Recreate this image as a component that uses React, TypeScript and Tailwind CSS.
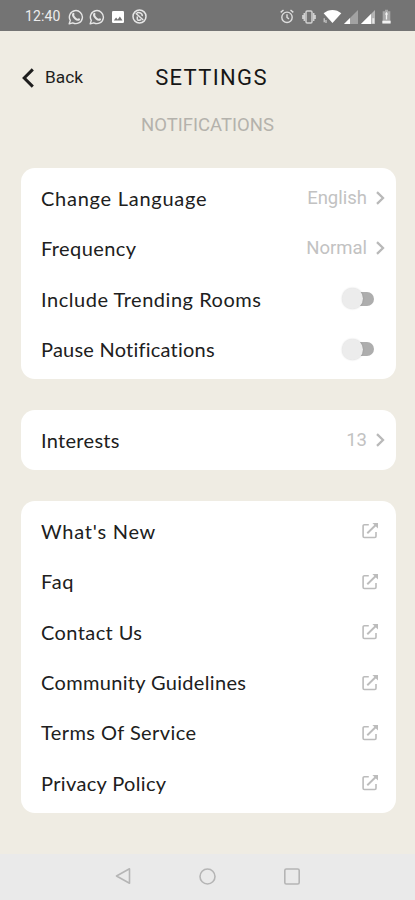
import type { ReactNode } from "react";

type Row = {
  label: string;
  tracking: string;
  value?: string;
  kind: "value" | "toggle" | "link";
};

const groups: Row[][] = [
  [
    { label: "Change Language", tracking: "tracking-[0.74px]", value: "English", kind: "value" },
    { label: "Frequency", tracking: "tracking-[0.4px]", value: "Normal", kind: "value" },
    { label: "Include Trending Rooms", tracking: "tracking-[0.53px]", kind: "toggle" },
    { label: "Pause Notifications", tracking: "tracking-[0.23px]", kind: "toggle" },
  ],
  [{ label: "Interests", tracking: "tracking-[0.3px]", value: "13", kind: "value" }],
  [
    { label: "What's New", tracking: "tracking-[0.75px]", kind: "link" },
    { label: "Faq", tracking: "tracking-[0.75px]", kind: "link" },
    { label: "Contact Us", tracking: "tracking-[0.4px]", kind: "link" },
    { label: "Community Guidelines", tracking: "tracking-[0.33px]", kind: "link" },
    { label: "Terms Of Service", tracking: "tracking-[0.42px]", kind: "link" },
    { label: "Privacy Policy", tracking: "tracking-[0.35px]", kind: "link" },
  ],
];

function WhatsAppIcon() {
  return (
    <svg width="16" height="16" viewBox="0 0 16 16" fill="none" stroke="#e6e6e6" strokeWidth="1.4">
      <path d="M1.2 14.8 2.3 11.4A6.5 6.5 0 1 1 4.8 13.8Z" strokeLinejoin="round" />
      <path d="M5.4 4.9c-.8 1.2.2 3 1.6 4.3s3 2 4 1.2" strokeWidth="2.1" strokeLinecap="round" />
    </svg>
  );
}

function StatusBar() {
  return (
    <header className="flex h-[31px] shrink-0 items-center justify-between bg-[#747474] pt-[2px] pr-[24px] pl-[25px]">
      <div className="flex items-center">
        <span className="w-[43px] text-[14px] tracking-[0.1px] text-[#ececec]">12:40</span>
        <WhatsAppIcon />
        <span className="ml-[5px]">
          <WhatsAppIcon />
        </span>
        <svg className="ml-[7px]" width="12" height="12" viewBox="0 0 12 12">
          <rect width="12" height="12" rx="1.3" fill="#fff" />
          <path d="m1.8 9.6 2.3-3 1.6 1.9 2.2-2.9 2.6 4z" fill="#747474" />
        </svg>
        <svg className="ml-[8px]" width="15" height="15" viewBox="0 0 15 15" fill="none" stroke="#e6e6e6" strokeWidth="1.5">
          <circle cx="7.5" cy="7.5" r="6.5" />
          <path d="m3.8 4.2 7.4 6.8M5.3 10.8V7.4M4.8 3.8c3-.9 5.8.6 5.5 3.4M5.3 10.8c1.4.7 2.9.5 3.9-.1" />
        </svg>
      </div>
      <div className="flex items-center">
        <svg width="14" height="15" viewBox="0 0 14 15" fill="none" stroke="#dedede" strokeWidth="1.4">
          <circle cx="7" cy="8.3" r="5.2" />
          <path d="M7 5.3v3.2l2 1.4M.7 3.4 3.5 1M13.3 3.4 10.5 1" />
        </svg>
        <svg className="ml-[8px]" width="14" height="14" viewBox="0 0 14 14" fill="none" stroke="#d0d0d0" strokeWidth="1.5">
          <rect x="4" y="1" width="6" height="12" rx="1.2" />
          <path d="M2.3 3v8M11.7 3v8M.9 5v4M13.1 5v4" />
        </svg>
        <svg className="ml-[7px]" width="19" height="15" viewBox="0 0 19 15" fill="#fff">
          <path d="M.6 4.3C5.5-.2 13.4-.2 18.3 4.3L9.5 14z" />
          <path d="M1.2 9.2v4M3 11v3" stroke="#d8d8d8" strokeWidth="1.1" />
        </svg>
        <svg className="ml-[2px]" width="14" height="14" viewBox="0 0 14 14">
          <path d="M14 0v14H0z" fill="#a2a2a2" />
          <path d="M6 8v6H0z" fill="#fff" />
        </svg>
        <svg className="ml-[3px]" width="15" height="14" viewBox="0 0 15 14">
          <path d="M14 0v14H0z" fill="#b4b4b4" />
          <path d="M10 4v10H0z" fill="#fff" />
          <path d="M12.3 8.2v5.3" stroke="#e6e6e6" strokeWidth="2" />
        </svg>
        <svg className="ml-[6px]" width="9" height="15" viewBox="0 0 9 15">
          <path d="M3 .8h3v1.4h2.3v12H.7v-12H3z" fill="#a8a8a8" />
          <path d="M4.5 3.5v7M3.6 5.6 4.5 4l.9 1.6M1 12.4h7v1.4H1z" fill="#fff" stroke="#f2f2f2" strokeWidth="1.3" />
        </svg>
      </div>
    </header>
  );
}

function ChevronRight() {
  return (
    <svg className="ml-[9px]" width="9" height="14" viewBox="0 0 9 14" fill="none" stroke="#b9b9b9" strokeWidth="2.3">
      <path d="m1 1.2 6 5.8-6 5.8" />
    </svg>
  );
}

function Toggle() {
  return (
    <div className="mr-[11px] flex h-[14px] w-[31px] items-center rounded-full bg-[#adadad]">
      <div className="-ml-px size-[21px] shrink-0 rounded-full bg-[#ececec] shadow-[0_0_2px_rgba(0,0,0,0.18)]" />
    </div>
  );
}

function ExternalIcon() {
  return (
    <svg className="mr-[6px]" width="17" height="17" viewBox="0 0 17 17" fill="none" stroke="#bcbcbc" strokeWidth="1.6">
      <path d="M6.8 2.8H2.3A1.2 1.2 0 0 0 1.1 4v10.3a1.2 1.2 0 0 0 1.2 1.2h10.5a1.2 1.2 0 0 0 1.2-1.2V10" />
      <path d="M5.3 11.2 14 2.8" strokeWidth="1.9" />
      <path d="M10.4.9h5.6v5.5z" fill="#bcbcbc" stroke="none" />
    </svg>
  );
}

function SettingsRow({ row }: { row: Row }) {
  let control: ReactNode = <ExternalIcon />;
  if (row.kind === "toggle") control = <Toggle />;
  if (row.kind === "value") {
    control = (
      <>
        <span className="pt-[2px] text-[18.5px] text-[#c2c2c2]">{row.value}</span>
        <ChevronRight />
      </>
    );
  }

  return (
    <div className="flex h-[50.4px] items-center justify-between pr-[11px] pl-5">
      <span className={`font-[Lato,sans-serif] text-[20px] whitespace-nowrap text-[#202020] ${row.tracking}`}>
        {row.label}
      </span>
      <div className="flex items-center">{control}</div>
    </div>
  );
}

export default function App() {
  return (
    <div className="flex h-[900px] w-[415px] flex-col overflow-hidden bg-[#efece3] font-[Roboto,sans-serif]">
      <StatusBar />

      <div className="mt-[30px] grid h-[32px] grid-cols-[1fr_auto_1fr] items-center pr-[14px] pl-[22px]">
        <button className="flex items-center text-[17.3px] text-[#1e1e1e]">
          <svg className="mr-[11px]" width="12" height="20" viewBox="0 0 12 20" fill="none" stroke="#1e1e1e" strokeWidth="3">
            <path d="M10.8 1.4 2.2 10l8.6 8.6" />
          </svg>
          Back
        </button>
        <h1 className="text-[22px] tracking-[1.35px] text-[#161616]">SETTINGS</h1>
      </div>

      <h2 className="mt-[18px] h-[28px] text-center text-[18.5px] leading-[28px] text-[#b4b2ac]">NOTIFICATIONS</h2>

      <main className="mt-[28.7px] flex flex-1 flex-col gap-[30.5px] pr-[19px] pl-[21px]">
        {groups.map((rows, index) => (
          <section key={index} className="rounded-[14px] bg-white py-[5px]">
            {rows.map((row) => (
              <SettingsRow key={row.label} row={row} />
            ))}
          </section>
        ))}
      </main>

      <nav className="flex h-[46px] shrink-0 items-center justify-center gap-[68px] bg-[#eaeaea] pb-[2px]">
        <svg width="16" height="18" viewBox="0 0 16 18" fill="none" stroke="#b5b5b5" strokeWidth="1.6">
          <path d="M14.5 1.8v14.4L1.5 9z" strokeLinejoin="round" />
        </svg>
        <svg width="17" height="17" viewBox="0 0 17 17" fill="none" stroke="#b5b5b5" strokeWidth="1.6">
          <circle cx="8.5" cy="8.5" r="7.5" />
        </svg>
        <svg width="16" height="17" viewBox="0 0 16 17" fill="none" stroke="#b5b5b5" strokeWidth="1.6">
          <rect x=".8" y="1" width="14.4" height="15" rx="1.5" />
        </svg>
      </nav>
    </div>
  );
}
